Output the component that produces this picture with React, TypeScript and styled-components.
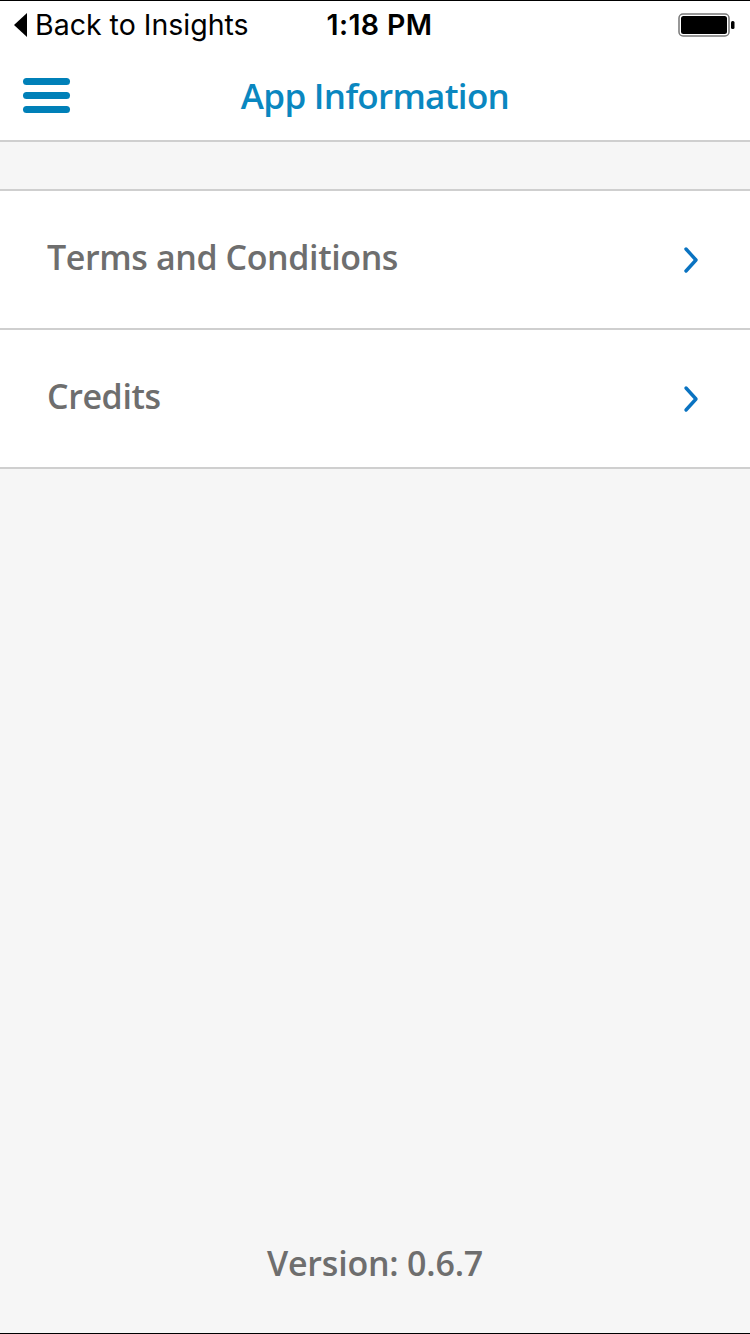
import styled, { createGlobalStyle } from "styled-components";

const GlobalStyle = createGlobalStyle`
  html, body {
    margin: 0;
    padding: 0;
    background: #f6f6f6;
  }
  * {
    box-sizing: border-box;
  }
`;

const Screen = styled.div`
  width: 750px;
  height: 1334px;
  display: flex;
  flex-direction: column;
  background: #f6f6f6;
  border-top: 1px solid #000;
  border-bottom: 1px solid #000;
  font-family: "Open Sans", "Noto Sans", sans-serif;
`;

const StatusBar = styled.div`
  height: 47px;
  background: #fff;
  display: grid;
  grid-template-columns: 1fr auto 1fr;
  align-items: center;
  padding: 0 14px 0 14px;
  font-family: Inter, "Noto Sans", sans-serif;
  color: #000;

  .back {
    display: flex;
    align-items: center;
    gap: 7px;
    font-size: 28.5px;
  }
  .time {
    font-size: 28.5px;
    font-weight: 600;
    letter-spacing: 0.4px;
    padding-left: 9px;
  }
  .battery {
    justify-self: end;
    display: flex;
  }
`;

const NavBar = styled.div`
  height: 94px;
  background: #fff;
  border-bottom: 2px solid #cfcfcf;
  display: grid;
  grid-template-columns: 120px 1fr 120px;
  align-items: center;
`;

const MenuButton = styled.button`
  border: none;
  background: inherit;
  padding: 2px 0 0 23px;
  display: flex;
  flex-direction: column;
  gap: 7px;
  span {
    display: block;
    width: 47px;
    height: 7px;
    border-radius: 4px;
    background: #0080b8;
  }
`;

const Title = styled.h1`
  margin: 0;
  padding-top: 2px;
  text-align: center;
  font-size: 35px;
  font-weight: 600;
  letter-spacing: -0.7px;
  color: #0a87c0;
`;

const Spacer = styled.div`
  height: 49px;
  border-bottom: 2px solid #cfcfcf;
`;

const Row = styled.div`
  height: 139px;
  background: #fff;
  border-bottom: 2px solid #cfcfcf;
  display: flex;
  align-items: center;
  justify-content: space-between;
  padding: 0 49px 6px 47px;
  font-size: 34px;
  font-weight: 600;
  letter-spacing: -0.4px;
  color: #6e6e6e;

  svg {
    margin-top: 6px;
  }
`;

const Filler = styled.div`
  flex: 1;
`;

const Version = styled.div`
  text-align: center;
  font-size: 34px;
  font-weight: 600;
  letter-spacing: -0.2px;
  color: #6e6e6e;
  padding-bottom: 47px;
`;

const Chevron = () => (
  <svg width="20" height="28" viewBox="0 0 20 28">
    <path d="M5 3 L15 14 L5 25" fill="none" stroke="#0a73c1" strokeWidth="3.4" strokeLinecap="round" strokeLinejoin="round" />
  </svg>
);

const rows = ["Terms and Conditions", "Credits"];

const App = () => {
  return (
    <>
      <GlobalStyle />
      <Screen>
        <StatusBar>
          <div className="back">
            <svg width="14" height="24" viewBox="0 0 14 24">
              <path d="M13 0 L13 24 L0 12 Z" fill="#000" />
            </svg>
            Back to Insights
          </div>
          <div className="time">1:18 PM</div>
          <div className="battery">
            <svg width="58" height="24" viewBox="0 0 58 24">
              <rect x="1" y="1" width="50" height="22" rx="4" fill="none" stroke="#777" strokeWidth="1.5" />
              <rect x="3" y="3" width="46" height="18" rx="2.5" fill="#000" />
              <rect x="53" y="8" width="3.5" height="8" rx="1.5" fill="#000" />
            </svg>
          </div>
        </StatusBar>
        <NavBar>
          <MenuButton>
            <span />
            <span />
            <span />
          </MenuButton>
          <Title>App Information</Title>
          <div />
        </NavBar>
        <Spacer />
        {rows.map((r) => (
          <Row key={r}>
            {r}
            <Chevron />
          </Row>
        ))}
        <Filler />
        <Version>Version: 0.6.7</Version>
      </Screen>
    </>
  );
};

export default App;
